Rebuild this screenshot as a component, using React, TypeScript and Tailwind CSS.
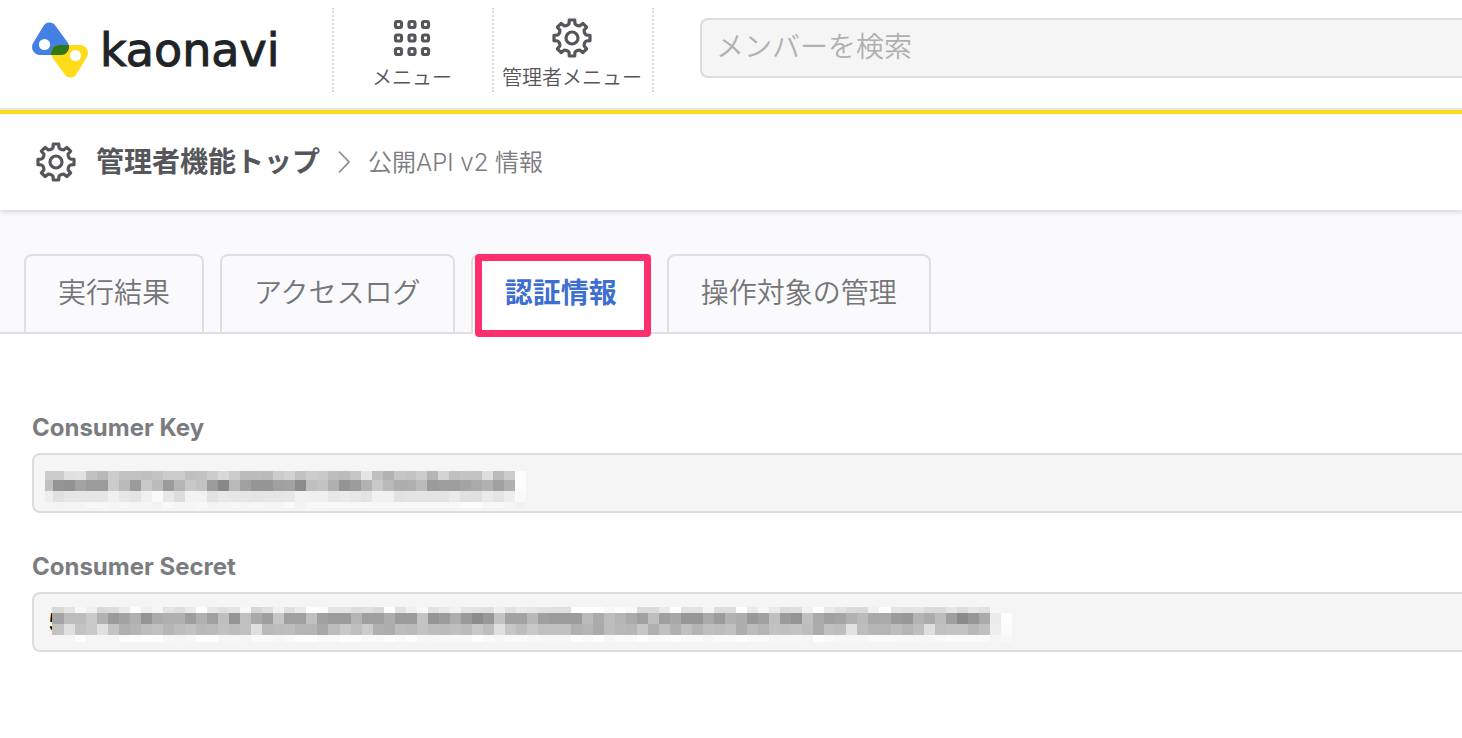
import React from 'react';

const TOOTH = [
  [-4.4, -12.9],
  [-3, -14.2],
  [-2.7, -18],
  [2.7, -18],
  [3, -14.2],
  [4.4, -12.9],
];

const GEAR_PATH =
  'M' +
  Array.from({ length: 8 }, (_, k) => {
    const a = (k * Math.PI) / 4;
    return TOOTH.map(([x, y]) =>
      [20 + x * Math.cos(a) - y * Math.sin(a), 20 + x * Math.sin(a) + y * Math.cos(a)]
        .map((n) => n.toFixed(2))
        .join(' '),
    ).join('L');
  }).join('L') +
  'Z';

function GearIcon() {
  return (
    <svg viewBox="0 0 40 40" className="size-10 shrink-0" fill="none" stroke="currentColor" strokeWidth="3.2" strokeLinejoin="round" aria-hidden="true">
      <path d={GEAR_PATH} />
      <circle cx="20" cy="20" r="6" />
    </svg>
  );
}

function GridIcon() {
  return (
    <svg viewBox="0 0 40 40" className="size-10" fill="none" stroke="currentColor" strokeWidth="3.2" aria-hidden="true">
      {[3.5, 17, 30.5].map((y) =>
        [3.5, 17, 30.5].map((x) => <rect key={`${x}-${y}`} x={x} y={y} width="6" height="6" rx="1.8" />),
      )}
    </svg>
  );
}

const LOGO_SHAPE = 'M11.3 4.2A7 7 0 0 1 23.4 3.7L35.7 20.6A8 8 0 0 1 29 33H8A8 8 0 0 1 1 21.2Z';

function Logo() {
  return (
    <a href="#" className="flex items-center gap-3">
      <svg viewBox="0 0 56 56" className="size-14" aria-hidden="true">
        <defs>
          <clipPath id="logo-blue">
            <path d={LOGO_SHAPE} />
          </clipPath>
        </defs>
        <path d={LOGO_SHAPE} fill="#447fe3" />
        <path d={LOGO_SHAPE} fill="#ffdb1a" transform="rotate(180 28 28)" />
        <g clipPath="url(#logo-blue)">
          <path d={LOGO_SHAPE} fill="#30761a" transform="rotate(180 28 28)" />
        </g>
        <circle cx="12.5" cy="22.5" r="5.6" fill="#fff" />
        <circle cx="43.5" cy="33.5" r="5.6" fill="#fff" />
      </svg>
      <span className="font-['DejaVu_Sans'] text-[46px] leading-12 text-[#1e2428] [-webkit-text-stroke:1px_#1e2428]">
        kaonavi
      </span>
    </a>
  );
}

type MosaicData = { edges: number[]; rows: number[]; shades: string[] };

const KEY_MOSAIC: MosaicData = {
  edges: [0, ...Array.from({ length: 44 }, (_, i) => 8 + 11 * i)],
  rows: [0, 9, 20, 31, 37],
  shades: [
    'cc cc e0 e2 c0 b8 cc c2 c2 bf c4 cc cc bf c2 cc d8 cc bb bb b9 cc d2 c2 cc c9 bd ba c6 e4 c0 b2 c6 c3 cc b5 d4 c0 c4 c3 de bb cc fd',
    'c0 95 92 a3 9b 9b cb b9 9b c8 bb 9b b5 c8 c2 9b 88 b9 a0 95 95 a0 a2 8c bf c3 af 94 9c b2 c9 ba ae af bb 9b 9e 9e a4 aa b0 a0 b0 fd',
    'ee e0 e6 e6 e6 e6 f0 e8 e4 f0 fa e8 dd f2 f2 e2 e8 e6 e6 e4 e6 e6 e8 f2 f0 f0 e7 ea e7 e4 f2 f2 e2 e4 e4 e4 e4 ea e1 e0 ea e4 ee fa',
    'f5 f3 f5 f5 f8 f7 f5 f7 f5 f5 f3 f8 f5 f5 f7 f3 f5 f7 f5 f7 f5 f5 fa f3 f7 f7 f9 f8 f8 f8 f7 f7 f8 f8 f8 f8 f8 f8 fb fb f7 f8 f5 f2',
  ],
};

const SECRET_MOSAIC: MosaicData = {
  edges: [0, ...Array.from({ length: 87 }, (_, i) => Math.round(12 + 11.02 * i))],
  rows: [0, 6, 17, 28, 35],
  shades: [
    'd8 e4 f8 f0 d8 dc eb fd f0 f6 e4 df eb fd e8 df e4 f8 d6 df f2 df eb fd fc e4 e4 dc e0 da ff e2 f0 f8 e2 ea f2 e4 e2 e0 f0 e2 ea e6 e0 df df fe fe fe f8 fc f8 da da ea ff e2 e2 f4 dc dc ff ea f6 ea dc de f2 ff ea e2 da da f0 ff e4 e2 e4 da da e6 dc e6 e0 f5 f5',
    'a4 bc bc ca b2 9b a3 b0 94 ab af b0 9e b0 a0 bf 94 c0 a9 9e c6 a0 a0 c0 a0 9b 9b b4 9f 9f ae 9c 9c c3 94 9b ae 9a 8c 98 c4 a3 a3 b8 9f 9b 9b 9b bb ab bd b4 aa a0 be 9f a8 97 97 aa 9c b2 ae 99 a0 bf 9b 94 c0 ab a0 a4 b2 bb a9 ab 9b 98 b4 ab bd 9f 8a 96 aa eb fd',
    'c3 e0 c3 c9 e0 c3 b0 b5 bc c0 b5 bc c2 b8 bb c2 bd c0 df b9 bc bd b6 b5 a8 bc c8 bf cc b0 ad bd bb c3 bd bb bf bb c8 bd e0 c6 bd c8 c0 c0 c0 b0 b4 aa bd b8 b6 c6 b0 c0 b0 bf b4 bf bc c0 ad bc b4 c3 c0 c3 bd ac c0 bd e2 bd b6 b4 bd b4 bf df c0 c3 c3 b8 bf ee fb',
    'f5 f5 fd f6 f5 f5 fc fc fd fd f7 f5 f7 fe fe f7 f7 f5 fa fa f7 fa fd fe fa fa fe fe fa fa fe fa fe f7 f7 f9 f9 f9 fe fa f7 fa fa f9 f7 f7 f7 fe fa fe f7 fa fa fe fa fa fe fa fa f7 fa fa fe fa fa f6 f7 f7 f5 ff fa f7 f7 f7 fa fa f9 f9 f7 f7 f9 fa fa fa fa f5 f8',
  ],
};

function Mosaic({ data, className }: { data: MosaicData; className: string }) {
  const { edges, rows, shades } = data;
  return (
    <svg width={edges[edges.length - 1]} height={rows[4]} shapeRendering="crispEdges" className={className} aria-hidden="true">
      {shades.map((line, r) =>
        line.split(' ').map((s, c) => (
          <rect key={`${r}-${c}`} x={edges[c]} y={rows[r]} width={edges[c + 1] - edges[c]} height={rows[r + 1] - rows[r]} fill={`#${s}${s}${s}`} />
        )),
      )}
    </svg>
  );
}

function Field({ id, label, value, children }: { id: string; label: string; value: string; children: React.ReactNode }) {
  return (
    <div className="flex flex-col gap-[9px]">
      <label htmlFor={id} className="font-[Inter] text-2xl leading-8 font-bold text-[#7b7c80]">
        {label}
      </label>
      <div className="relative">
        <input
          id={id}
          readOnly
          defaultValue={value}
          className="h-15 w-full rounded-l-lg border-2 border-r-0 border-[#dcdcdc] bg-[#f5f5f5] px-3.5 font-[Inter] text-2xl text-black outline-none"
        />
        {children}
      </div>
    </div>
  );
}

function Tab({ label, active = false }: { label: string; active?: boolean }) {
  return (
    <button
      role="tab"
      aria-selected={active}
      className={
        active
          ? 'relative -mb-0.5 h-20 rounded-t-lg border-2 border-b-0 border-[#dfdfe0] bg-white px-8 pb-1 text-[28px] leading-10 font-bold text-[#3e6fd0]'
          : 'h-[78px] rounded-t-lg border-2 border-b-0 border-[#dfdfe0] px-8 pb-0.5 text-[28px] leading-10 font-[350] text-[#747578]'
      }
    >
      {label}
      {active && <span className="absolute -top-0.5 -right-0.5 -bottom-[3px] left-0.5 rounded-sm border-7 border-[#ff2e6c]" />}
    </button>
  );
}

export default function App() {
  return (
    <div className="min-h-screen overflow-x-hidden bg-white font-['Inter','Noto_Sans_CJK_JP',sans-serif] text-[#55565a]">
      <header className="relative z-10 flex h-[114px] items-start border-b-4 border-[#ffd91a] bg-white">
        <div className="flex h-[110px] flex-1 items-start border-b-2 border-[#e2e4e8]">
          <div className="w-[332px] shrink-0 pt-[22px] pl-8">
            <Logo />
          </div>
          <nav className="mt-2 flex h-[84px] shrink-0 border-r-2 border-dotted border-[#d9d9d9]">
            <a href="#" className="flex w-40 flex-col items-center border-l-2 border-dotted border-[#d9d9d9] pt-2.5 pr-0.5">
              <GridIcon />
              <span className="mt-1.5 text-xl leading-7 font-[350]">メニュー</span>
            </a>
            <a href="#" className="flex w-40 flex-col items-center border-l-2 border-dotted border-[#d9d9d9] pt-2.5 pr-0.5">
              <GearIcon />
              <span className="mt-1.5 text-xl leading-7 font-[350] whitespace-nowrap">管理者メニュー</span>
            </a>
          </nav>
          <input
            type="search"
            aria-label="メンバーを検索"
            placeholder="メンバーを検索"
            className="mt-[18px] ml-[46px] h-15 min-w-0 flex-1 rounded-l-lg border-2 border-r-0 border-[#dcdcdc] bg-[#f5f5f5] px-3.5 pb-0.5 text-[28px] font-[350] outline-none placeholder:text-[#b0b0b0]"
          />
        </div>
      </header>

      <nav aria-label="breadcrumb" className="relative flex h-24 items-center bg-white pl-9 shadow-[0_1px_6px_rgba(0,0,0,0.2)]">
        <GearIcon />
        <a href="#" className="ml-5 text-[28px] leading-10 font-bold">
          管理者機能トップ
        </a>
        <svg viewBox="0 0 14 24" className="mx-[17px] h-6 w-3.5" fill="none" stroke="#8c8d90" strokeWidth="1.8" aria-hidden="true">
          <path d="M2 1.5L12 12L2 22.5" />
        </svg>
        <span className="pt-0.5 text-2xl leading-10 font-[350] text-[#7b7c80]">公開API v2 情報</span>
      </nav>

      <div role="tablist" className="flex items-end gap-4 border-b-2 border-[#dfdfe0] bg-[#fafafc] pt-11 pl-6">
        <Tab label="実行結果" />
        <Tab label="アクセスログ" />
        <Tab label="認証情報" active />
        <Tab label="操作対象の管理" />
      </div>

      <main className="flex flex-col gap-[38px] pt-[78px] pl-8">
        <Field id="consumer-key" label="Consumer Key" value="">
          <Mosaic data={KEY_MOSAIC} className="absolute top-[18px] left-[13px]" />
        </Field>
        <Field id="consumer-secret" label="Consumer Secret" value="5">
          <Mosaic data={SECRET_MOSAIC} className="absolute top-[15px] left-5" />
        </Field>
      </main>
    </div>
  );
}
